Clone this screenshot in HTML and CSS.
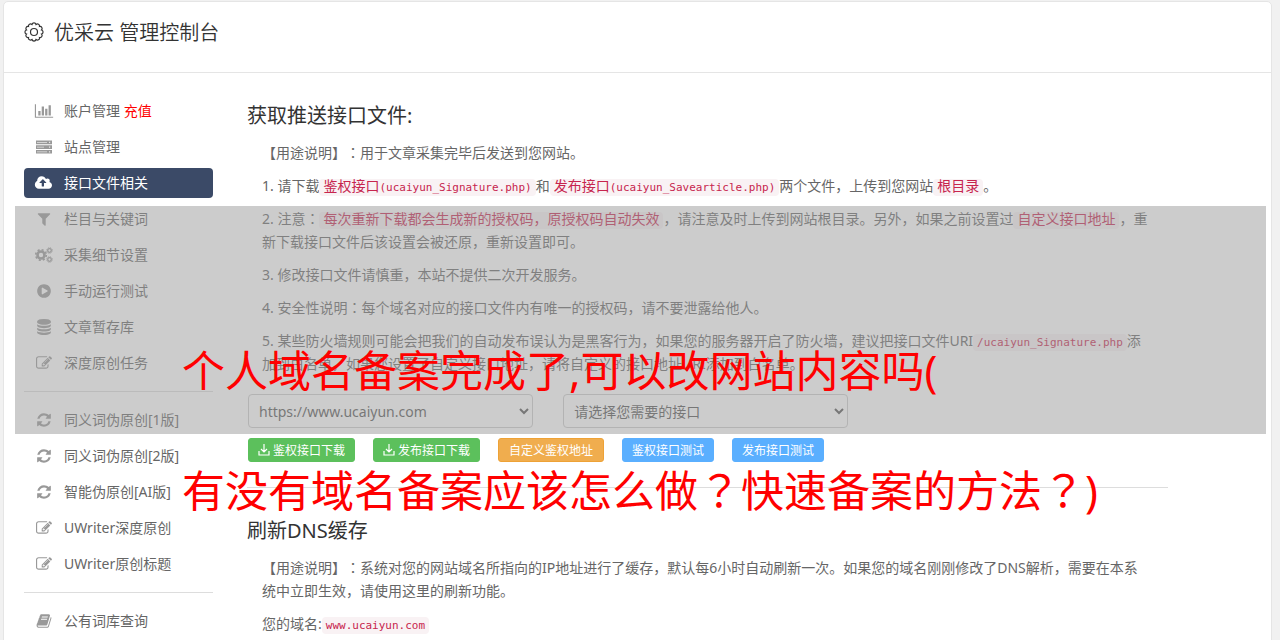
FILE: index.html
```
<!DOCTYPE html>
<html lang="zh-CN">

<head>
    <meta charset="UTF-8">
    <meta name="viewport" content="width=device-width, initial-scale=1.0">
    <title>优采云 管理控制台</title>
    <link rel="stylesheet" href="styles.css">
</head>

<body>
    <svg class="icon-defs" xmlns="http://www.w3.org/2000/svg">
        <symbol id="i-refresh" viewBox="0 0 1792 1792"><path d="M1639 1056q0 5-1 7-64 268-268 434.500t-478 166.500q-146 0-282.500-55t-243.500-157l-129 129q-19 19-45 19t-45-19-19-45v-448q0-26 19-45t45-19h448q26 0 45 19t19 45-19 45l-137 137q71 66 161 102t187 36q134 0 250-65t186-179q11-17 53-117 8-23 30-23h192q13 0 22.500 9.500t9.500 22.500zm25-800v448q0 26-19 45t-45 19h-448q-26 0-45-19t-19-45 19-45l138-138q-148-137-349-137-134 0-250 65t-186 179q-11 17-53 117-8 23-30 23h-199q-13 0-22.500-9.500t-9.500-22.500v-7q65-268 270-434.500t480-166.500q146 0 284 55.500t245 156.500l130-129q19-19 45-19t45 19 19 45z"/></symbol>
        <symbol id="i-edit" viewBox="0 0 1792 1792"><path d="M888 1184l116-116-152-152-116 116v56h96v96h56zm440-720q-16-16-33 1l-350 350q-17 17-1 33t33-1l350-350q17-17 1-33zm80 594v190q0 119-84.500 203.500t-203.500 84.500h-832q-119 0-203.500-84.500t-84.500-203.500v-832q0-119 84.500-203.500t203.500-84.500h832q63 0 117 25 15 7 18 23 3 17-9 29l-49 49q-14 14-32 8-23-6-45-6h-832q-66 0-113 47t-47 113v832q0 66 47 113t113 47h832q66 0 113-47t47-113v-126q0-13 9-22l64-64q15-15 35-7t20 29zm-96-738l288 288-672 672h-288v-288zm444 132l-92 92-288-288 92-92q28-28 68-28t68 28l152 152q28 28 28 68t-28 68z"/></symbol>
        <symbol id="i-download" viewBox="0 0 12 12"><path d="M6 0v8M3 5l3 3 3-3M1 7v4h10V7" fill="none" stroke="currentColor" stroke-width="1.200"/></symbol>
    </svg>

    <div class="card">
        <header class="card-header">
            <svg class="gear" viewBox="0 0 20 20">
                <path d="M17.530 12.020A2.100 2.100 0 0 1 15.520 15.520A2.100 2.100 0 0 1 12.020 17.530A2.100 2.100 0 0 1 7.980 17.530A2.100 2.100 0 0 1 4.480 15.520A2.100 2.100 0 0 1 2.470 12.020A2.100 2.100 0 0 1 2.470 7.980A2.100 2.100 0 0 1 4.480 4.480A2.100 2.100 0 0 1 7.980 2.470A2.100 2.100 0 0 1 12.020 2.470A2.100 2.100 0 0 1 15.520 4.480A2.100 2.100 0 0 1 17.530 7.980A2.100 2.100 0 0 1 17.530 12.020z"/>
                <circle cx="10" cy="10" r="3.500"/>
            </svg>
            <h1>优采云 管理控制台</h1>
        </header>

        <div class="card-body">
            <nav class="sidebar">
                <a class="nav-item" href="#">
                    <svg class="icon" viewBox="0 0 2048 1792"><path d="M640 896v512h-256v-512h256zm384-512v1024h-256v-1024h256zm1024 1152v128h-2048v-1536h128v1408h1920zm-640-896v768h-256v-768h256zm384-384v1152h-256v-1152h256z"/></svg>
                    <span>账户管理 <b class="recharge">充值</b></span>
                </a>
                <a class="nav-item" href="#">
                    <svg class="icon server" viewBox="0 0 16 16">
                        <path d="M0 1.500h16v3.700H0zM0 6.200h16v3.700H0zM0 10.900h16v3.700H0z"/>
                        <path class="slot" d="M1 3h10v.8H1zM1 7.700h7v.8H1zM1 12.400h10v.8H1zM13 2.800h1.200V4H13zM13 7.500h1.200v1.200H13zM13 12.200h1.200v1.200H13z"/>
                    </svg>
                    <span>站点管理</span>
                </a>
                <a class="nav-item active" href="#">
                    <svg class="icon" viewBox="0 0 1920 1792"><path fill-rule="evenodd" d="M1216 864q0-14-9-23l-352-352q-9-9-23-9t-23 9l-351 351q-10 12-10 24 0 14 9 23t23 9h224v352q0 13 9.500 22.500t22.500 9.500h192q13 0 22.500-9.500t9.500-22.500v-352h224q13 0 22.500-9.500t9.500-22.500zm640 288q0 159-112.500 271.500t-271.500 112.500h-1088q-185 0-316.500-131.500t-131.500-316.500q0-130 70-240t188-165q-2-30-2-43 0-212 150-362t362-150q156 0 285.500 87t188.500 231q71-62 166-62 106 0 181 75t75 181q0 76-41 138 130 31 213.500 135.500t83.500 238.500z"/></svg>
                    <span>接口文件相关</span>
                </a>
                <a class="nav-item" href="#">
                    <svg class="icon" viewBox="0 0 1792 1792"><path d="M1595 295q17 41-14 70l-493 493v742q0 42-39 59-13 5-25 5-27 0-45-19l-256-256q-19-19-19-45v-486l-493-493q-31-29-14-70 17-39 59-39h1280q42 0 59 39z"/></svg>
                    <span>栏目与关键词</span>
                </a>
                <a class="nav-item" href="#">
                    <svg class="icon cogs" viewBox="0 0 18 16">
                        <circle cx="6" cy="8" r="3.500" stroke-width="2.600"/>
                        <circle cx="6" cy="8" r="5.300" stroke-width="1.600" stroke-dasharray="2.080"/>
                        <circle cx="14.500" cy="3.500" r="1.800" stroke-width="1.300"/>
                        <circle cx="14.500" cy="3.500" r="2.800" stroke-width="1" stroke-dasharray="1.100"/>
                        <circle cx="14.500" cy="12.500" r="1.800" stroke-width="1.300"/>
                        <circle cx="14.500" cy="12.500" r="2.800" stroke-width="1" stroke-dasharray="1.100"/>
                    </svg>
                    <span>采集细节设置</span>
                </a>
                <a class="nav-item" href="#">
                    <svg class="icon" viewBox="0 0 1792 1792"><path fill-rule="evenodd" d="M1312 896q0 37-32 55l-544 320q-15 9-32 9-16 0-32-8-32-19-32-56v-640q0-37 32-56 33-18 64 1l544 320q32 18 32 55zM1664 896q0 209-103 385.500t-279.500 279.500-385.500 103-385.500-103-279.500-279.500-103-385.500 103-385.500 279.500-279.500 385.500-103 385.500 103 279.500 279.500 103 385.500z"/></svg>
                    <span>手动运行测试</span>
                </a>
                <a class="nav-item" href="#">
                    <svg class="icon" viewBox="0 0 1792 1792"><path d="M896 768q237 0 443-43t325-127v170q0 69-103 128t-280 93.500-385 34.500-385-34.500-280-93.500-103-128v-170q119 84 325 127t443 43zm0 768q237 0 443-43t325-127v170q0 69-103 128t-280 93.500-385 34.500-385-34.500-280-93.500-103-128v-170q119 84 325 127t443 43zm0-384q237 0 443-43t325-127v170q0 69-103 128t-280 93.500-385 34.500-385-34.500-280-93.500-103-128v-170q119 84 325 127t443 43zm0-1152q208 0 385 34.500t280 93.500 103 128v128q0 69-103 128t-280 93.500-385 34.500-385-34.500-280-93.500-103-128v-128q0-69 103-128t280-93.500 385-34.500z"/></svg>
                    <span>文章暂存库</span>
                </a>
                <a class="nav-item" href="#"><svg class="icon"><use href="#i-edit"/></svg><span>深度原创任务</span></a>
                <hr>
                <a class="nav-item" href="#"><svg class="icon"><use href="#i-refresh"/></svg><span>同义词伪原创[1版]</span></a>
                <a class="nav-item" href="#"><svg class="icon"><use href="#i-refresh"/></svg><span>同义词伪原创[2版]</span></a>
                <a class="nav-item" href="#"><svg class="icon"><use href="#i-refresh"/></svg><span>智能伪原创[AI版]</span></a>
                <a class="nav-item" href="#"><svg class="icon"><use href="#i-edit"/></svg><span>UWriter深度原创</span></a>
                <a class="nav-item" href="#"><svg class="icon"><use href="#i-edit"/></svg><span>UWriter原创标题</span></a>
                <hr>
                <a class="nav-item" href="#">
                    <svg class="icon" viewBox="0 0 1792 1792"><path d="M1703 478q40 57 18 129l-275 906q-19 64-76.500 107.500t-122.500 43.500h-923q-77 0-148.500-53.500t-99.500-131.500q-24-67-2-127 0-4 3-27t4-37q1-8-3-21.500t-3-19.500q2-11 8-21t16.500-23.500 16.500-23.500q23-38 45-91.500t30-91.500q3-10 .5-30t-.5-28q3-11 17-28t17-23q21-36 42-92t25-90q1-9-2.500-32t.5-28q4-13 22-30.500t22-22.500q19-26 42.500-84.500t27.500-96.500q1-8-3-25.500t-2-26.500q2-8 9-18t18-23 17-21q8-12 16.500-30.500t15-35 16-36 19.500-32 26.500-23.500 36-11.500 47.500 5.500l-1 3q38-9 51-9h761q74 0 114 56t18 130l-274 906q-36 119-71.500 153.500t-128.500 34.500h-869q-27 0-38 15-11 16-1 43 24 70 144 70h923q29 0 56-15.500t35-41.500l300-987q7-22 5-57 38 15 59 43zm-1064 2q-4 13 2 22.500t20 9.500h608q13 0 25.500-9.500t16.500-22.500l21-64q4-13-2-22.500t-20-9.500h-608q-13 0-25.500 9.500t-16.500 22.500zm-83 256q-4 13 2 22.500t20 9.500h608q13 0 25.500-9.500t16.500-22.500l21-64q4-13-2-22.500t-20-9.500h-608q-13 0-25.500 9.500t-16.500 22.500z"/></svg>
                    <span>公有词库查询</span>
                </a>
            </nav>

            <main class="main">
                <section>
                    <h2>获取推送接口文件:</h2>
                    <div class="notes">
                        <p>【用途说明】<span class="mark" lang="zh-TW">：</span>用于文章采集完毕后发送到您网站。</p>
                        <p>1. 请下载<code><span class="zh">鉴权接口</span>(ucaiyun_Signature.php)</code>和<code><span class="zh">发布接口</span>(ucaiyun_Savearticle.php)</code>两个文件，上传到您网站<code><span class="zh">根目录</span></code>。</p>
                        <p>2. 注意<span class="mark" lang="zh-TW">：</span><code><span class="zh">每次重新下载都会生成新的授权码，原授权码自动失效</span></code>，请注意及时上传到网站根目录。另外，如果之前设置过<code><span class="zh">自定义接口地址</span></code>，重新下载接口文件后该设置会被还原，重新设置即可。</p>
                        <p>3. 修改接口文件请慎重，本站不提供二次开发服务。</p>
                        <p>4. 安全性说明<span class="mark" lang="zh-TW">：</span>每个域名对应的接口文件内有唯一的授权码，请不要泄露给他人。</p>
                        <p>5. 某些防火墙规则可能会把我们的自动发布误认为是黑客行为，如果您的服务器开启了防火墙，建议把接口文件URI<code>/ucaiyun_Signature.php</code>添加到白名单，如果您设置了自定义接口地址，请将自定义的接口地址URI添加到白名单。</p>
                    </div>
                    <div class="selects">
                        <select aria-label="网站域名">
                            <option>https://www.ucaiyun.com</option>
                        </select>
                        <select aria-label="接口">
                            <option>请选择您需要的接口</option>
                        </select>
                    </div>
                    <div class="buttons">
                        <button class="btn green"><svg><use href="#i-download"/></svg>鉴权接口下载</button>
                        <button class="btn green"><svg><use href="#i-download"/></svg>发布接口下载</button>
                        <button class="btn orange">自定义鉴权地址</button>
                        <button class="btn blue">鉴权接口测试</button>
                        <button class="btn blue">发布接口测试</button>
                    </div>
                </section>
                <hr>
                <section>
                    <h2>刷新DNS缓存</h2>
                    <div class="notes">
                        <p>【用途说明】<span class="mark" lang="zh-TW">：</span>系统对您的网站域名所指向的IP地址进行了缓存，默认每6小时自动刷新一次。如果您的域名刚刚修改了DNS解析，需要在本系统中立即生效，请使用这里的刷新功能。</p>
                        <p>您的域名:<code>www.ucaiyun.com</code></p>
                    </div>
                </section>
            </main>
        </div>
    </div>

    <div class="banner">
        <div>个人域名备案完成了,可以改网站内容吗(</div>
        <div>有没有域名备案应该怎么做<span class="mark" lang="zh-TW">？</span>快速备案的方法<span class="mark" lang="zh-TW">？</span>)</div>
    </div>
</body>

</html>
```
FILE: styles.css
```
* {
    box-sizing: border-box;
}

body {
    margin: 0;
    padding: 1px 8px 0 3px;
    height: 100vh;
    overflow: hidden;
    position: relative;
    background: #f1f1f1;
    color: #666;
    font-family: "Noto Sans", "Noto Sans CJK SC", sans-serif;
    font-size: 14px;
    font-weight: 400;
    line-height: 23px;
    text-spacing-trim: space-all;
}

.icon-defs {
    display: none;
}

.card {
    min-height: 100vh;
    background: #fff;
    border: 1px solid #e5e5e5;
    border-radius: 5px;
}

.card-header {
    display: flex;
    align-items: center;
    gap: 10px;
    height: 71px;
    padding: 0 20px 8px;
    border-bottom: 1px solid #e5e5e5;
}

.card-header h1 {
    margin: 0;
    color: #333;
    font-size: 20px;
    font-weight: 350;
    line-height: 30px;
}

.gear {
    width: 20px;
    height: 20px;
    margin-bottom: 3px;
    fill: none;
    stroke: #333;
    stroke-width: 1.2;
}

.card-body {
    display: flex;
    gap: 34px;
    padding: 23px 103px 0 20px;
}

hr {
    margin: 0;
    border: 0;
    border-top: 1px solid #ddd;
}

/* sidebar */
.sidebar {
    flex: 0 0 189px;
}

.sidebar hr {
    margin: 13px 0;
}

.nav-item {
    display: flex;
    align-items: center;
    gap: 10px;
    height: 30px;
    margin-bottom: 6px;
    padding-left: 10px;
    border-radius: 4px;
    color: #666;
    text-decoration: none;
}

.nav-item span {
    margin-bottom: 2px;
}

.nav-item.active {
    background: #3b4a67;
    color: #fff;
}

.recharge {
    color: #f00;
    font-weight: 400;
}

.icon {
    width: 20px;
    height: 16px;
    fill: #999;
}

.active .icon {
    fill: #fff;
}

.server .slot {
    fill: #e6e6e6;
}

.cogs circle {
    fill: none;
    stroke: #999;
}

/* main column */
.main {
    flex: 1;
    min-width: 0;
}

.main h2 {
    margin: 0;
    padding: 6px 0 11px;
    color: #333;
    font-size: 20px;
    font-weight: 400;
    line-height: 28px;
}

.notes {
    padding: 0 18px 0 15px;
}

.notes p {
    margin: 0 0 10px;
}

code {
    padding: 2px 4px;
    border-radius: 4px;
    background: #f9f2f4;
    color: #c7254e;
    font-family: "DejaVu Sans Mono", "Noto Sans CJK SC", monospace;
    font-size: 11px;
    line-height: 1;
}

.zh {
    font-family: "Noto Sans CJK SC", sans-serif;
    font-size: 14px;
}

/* punctuation centred in its cell */
.mark {
    font-family: "Noto Sans CJK TC", sans-serif;
    line-height: 1;
}

.selects {
    display: flex;
    gap: 30px;
    padding: 9px 0 0 1px;
}

.selects select {
    width: 31%;
    height: 34px;
    padding: 0 6px;
    border: 1px solid #ccc;
    border-radius: 4px;
    background: #fff;
    color: #555;
    font-family: inherit;
    font-size: 14px;
}

.buttons {
    display: flex;
    gap: 18px;
    padding: 10px 0 25px 1px;
}

.btn {
    display: flex;
    align-items: center;
    gap: 3px;
    height: 24px;
    padding: 0 9px;
    border: 1px solid;
    border-radius: 3px;
    color: #fff;
    font-family: inherit;
    font-size: 12px;
}

.btn svg {
    width: 12px;
    height: 12px;
}

.green {
    background: #5cc05c;
    border-color: #5cc05c;
}

.orange {
    padding: 0 10px;
    background: #f0ad4e;
    border-color: #eea236;
}

.blue {
    background: #5aafff;
    border-color: #5aafff;
}

.main hr + section {
    padding-top: 23px;
}

/* grey strip with the headline over the page */
.banner {
    position: absolute;
    top: 206px;
    left: 15px;
    right: 14px;
    height: 228px;
    padding: 105px 0 0 167px;
    background: rgba(153, 153, 153, 0.5);
    color: #f00;
    font-size: 43px;
    line-height: 120px;
    white-space: nowrap;
}
```
